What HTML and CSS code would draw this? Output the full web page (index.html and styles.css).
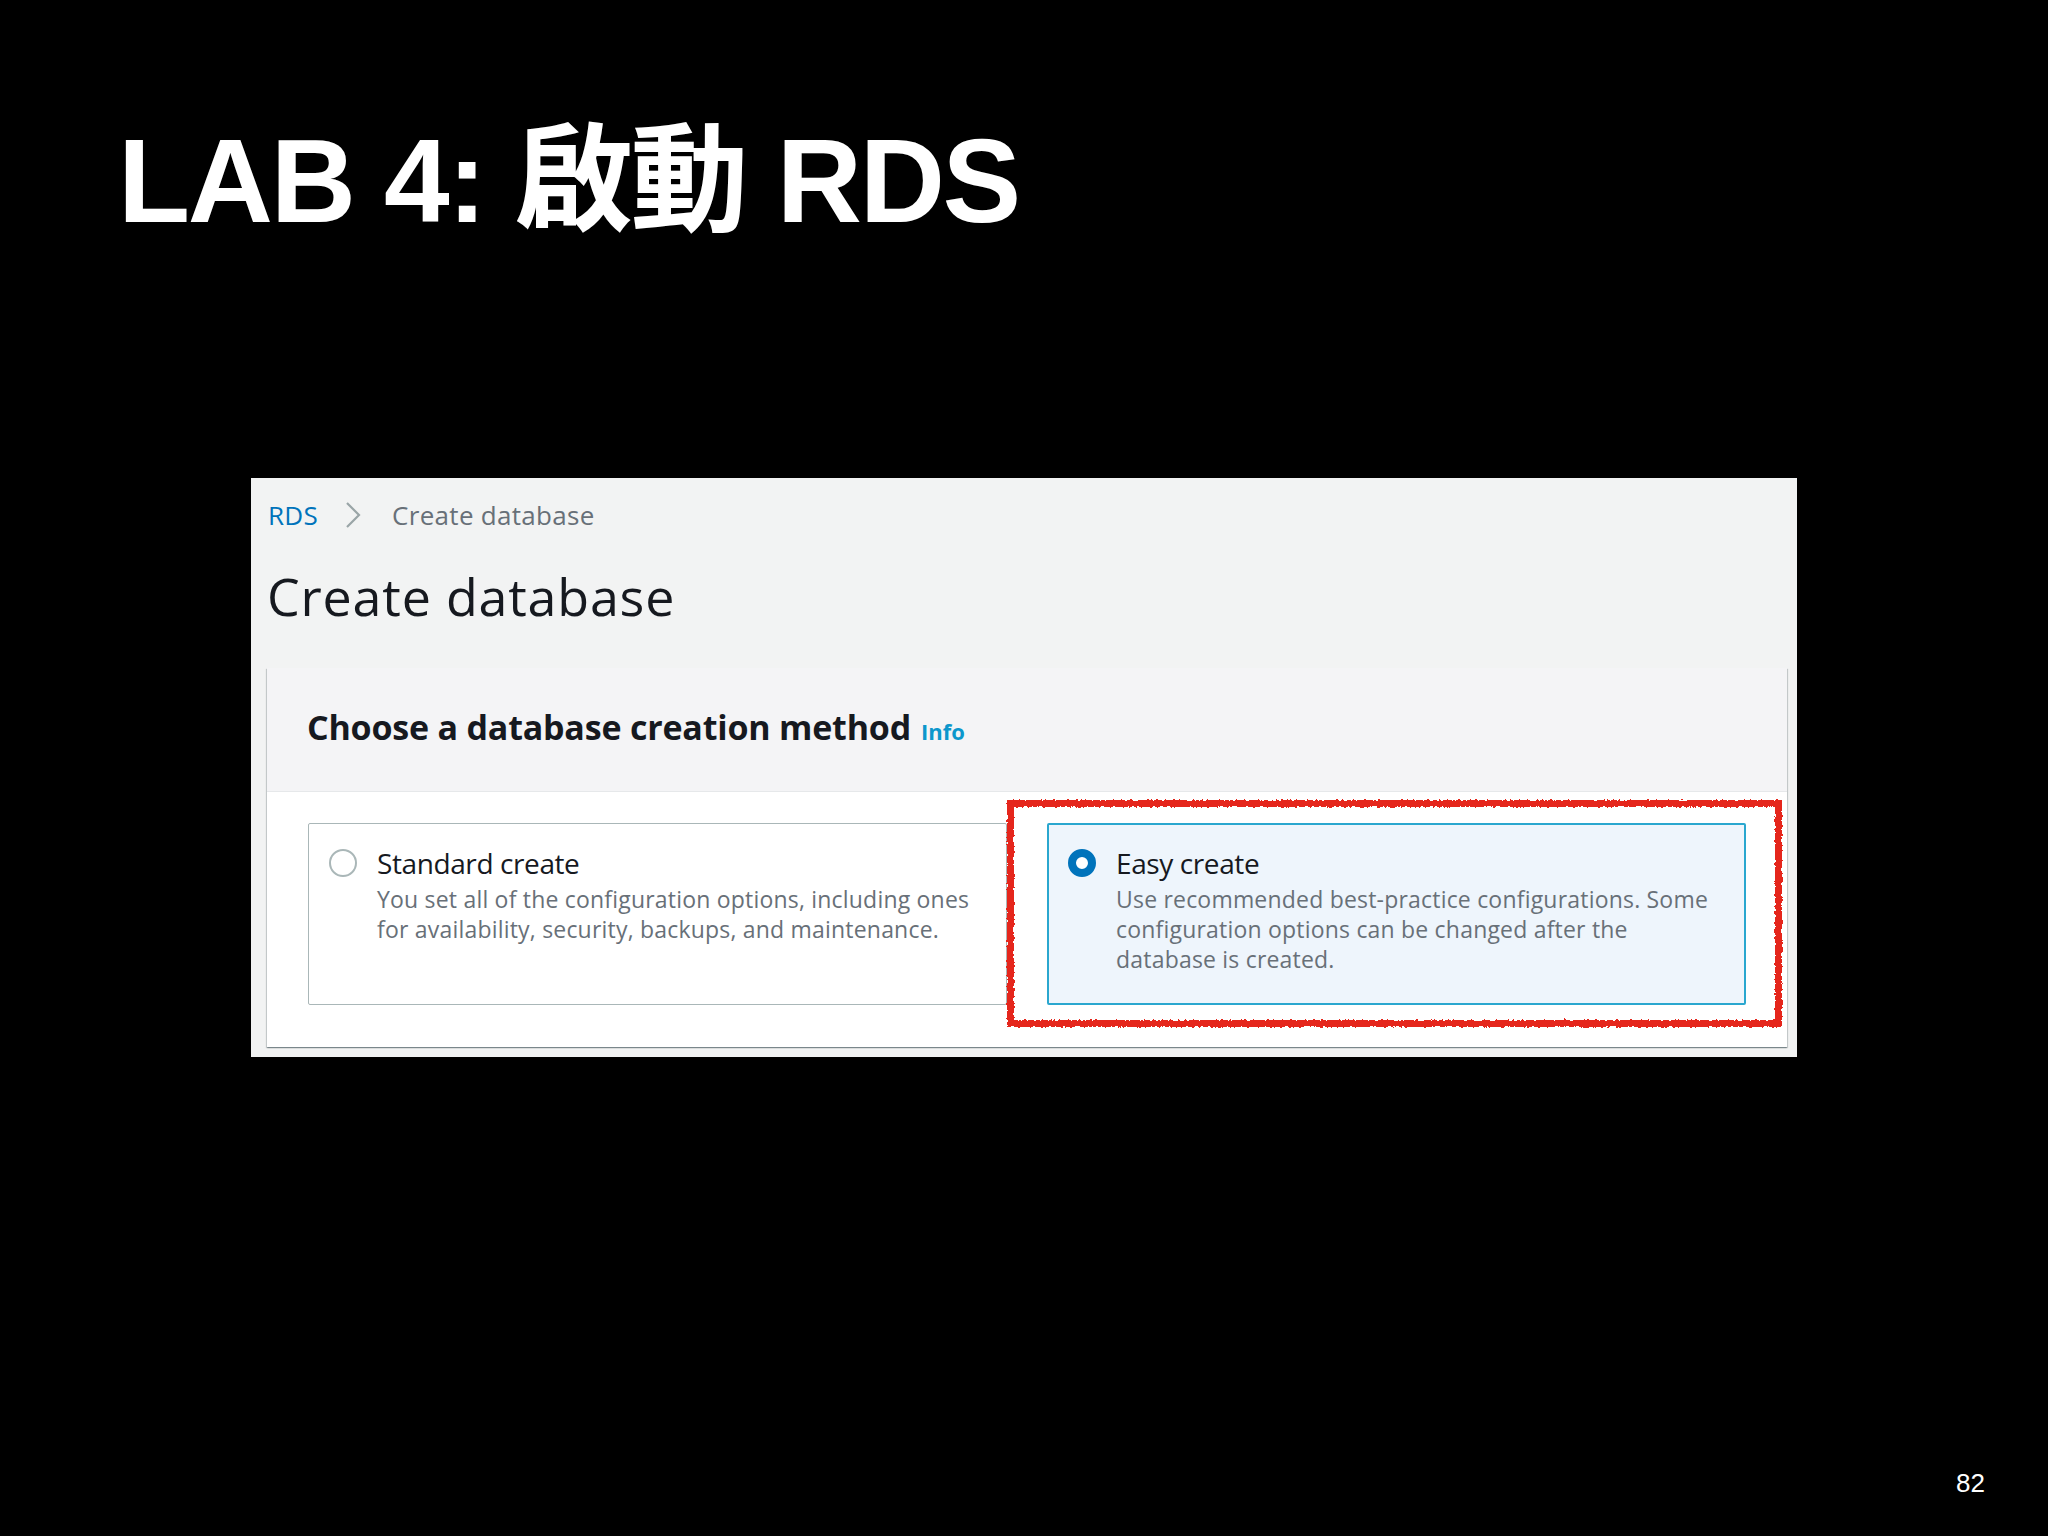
FILE: index.html
```html
<!DOCTYPE html>
<html lang="zh-Hant">
<head>
<meta charset="utf-8">
<title>LAB 4: 啟動 RDS</title>
<link rel="stylesheet" href="styles.css">
</head>
<body>
<div class="slide">
  <h1 class="slide-title">LAB 4: 啟動 RDS</h1>

  <div class="shot">
    <div class="breadcrumb">
      <span class="crumb-link">RDS</span>
      <svg class="crumb-sep" width="18" height="30" viewBox="0 0 18 30"><path d="M3 3 L15 15 L3 27" fill="none" stroke="#9aa5a7" stroke-width="2.2"/></svg>
      <span class="crumb-current">Create database</span>
    </div>
    <h2 class="page-heading">Create database</h2>

    <div class="card">
      <div class="card-header">
        <span class="card-title">Choose a database creation method</span>
        <span class="info-link">Info</span>
      </div>
      <div class="card-body">
        <div class="option">
          <span class="radio"></span>
          <div class="option-text">
            <div class="option-title">Standard create</div>
            <div class="option-desc">You set all of the configuration options, including ones<br>for availability, security, backups, and maintenance.</div>
          </div>
        </div>
        <div class="option option-selected">
          <span class="radio radio-on"></span>
          <div class="option-text">
            <div class="option-title">Easy create</div>
            <div class="option-desc">Use recommended best-practice configurations. Some<br>configuration options can be changed after the<br>database is created.</div>
          </div>
        </div>
        <div class="annotation"></div>
      </div>
    </div>
  </div>

  <div class="page-num">82</div>
</div>

<svg class="defs" width="0" height="0">
  <filter id="rough" x="-5%" y="-5%" width="110%" height="110%">
    <feTurbulence type="fractalNoise" baseFrequency="0.35" numOctaves="2" seed="3"/>
    <feDisplacementMap in="SourceGraphic" scale="4"/>
  </filter>
</svg>
</body>
</html>
```

FILE: styles.css
```css
html, body {
  margin: 0;
  padding: 0;
  background: #000;
}

.slide {
  width: 2048px;
  height: 1536px;
  display: flex;
  flex-direction: column;
  box-sizing: border-box;
  padding-bottom: 38px;
}

.slide-title {
  margin: 122px 0 0 118px;
  font-family: "Liberation Sans", "Noto Sans CJK TC", sans-serif;
  font-weight: 700;
  font-size: 118px;
  line-height: 118px;
  letter-spacing: -2.3px;
  color: #fff;
}

.shot {
  margin: 238px 0 0 251px;
  width: 1546px;
  height: 579px;
  box-sizing: border-box;
  background: #f2f3f3;
  padding: 19px 10px 0 16px;
  font-family: "Open Sans", "Noto Sans", sans-serif;
}

.breadcrumb {
  display: flex;
  align-items: center;
  height: 36px;
  font-size: 26px;
  line-height: 36px;
  letter-spacing: 0.3px;
}

.crumb-link {
  color: #0073bb;
  margin-left: 1px;
}

.crumb-sep {
  margin: 0 30px 0 26px;
}

.crumb-current {
  color: #687078;
}

.page-heading {
  margin: 33px 0 0 0;
  font-size: 52px;
  line-height: 60px;
  font-weight: 400;
  color: #16191f;
  letter-spacing: 0.8px;
}

.card {
  margin-top: 42px;
  background: #fff;
  box-shadow: 0 1px 1px 0 rgba(0, 28, 36, 0.3), 1px 1px 1px 0 rgba(0, 28, 36, 0.15), -1px 1px 1px 0 rgba(0, 28, 36, 0.15);
}

.card-header {
  height: 124px;
  box-sizing: border-box;
  padding: 39px 40px 0 40px;
  background: #f4f4f6;
  border-bottom: 1px solid #e6e8ea;
  display: flex;
  align-items: baseline;
  gap: 10px;
}

.card-title {
  font-size: 34px;
  line-height: 40px;
  font-weight: 700;
  color: #16191f;
  letter-spacing: -0.2px;
}

.info-link {
  font-size: 22px;
  font-weight: 700;
  color: #0c97cc;
  letter-spacing: 0;
}

.card-body {
  position: relative;
  padding: 31px 41px 42px 41px;
  display: grid;
  grid-template-columns: 1fr 1fr;
  gap: 40px;
}

.option {
  min-height: 182px;
  box-sizing: border-box;
  border: 1px solid #aab7b8;
  border-radius: 2px;
  background: #fff;
  padding: 21px 20px 20px 20px;
  display: flex;
  align-items: flex-start;
  gap: 20px;
}

.option-selected {
  border: 2px solid #2aa7cf;
  background: #eef5fc;
  padding: 20px 19px 19px 19px;
}

.radio {
  flex: none;
  width: 28px;
  height: 28px;
  box-sizing: border-box;
  border-radius: 50%;
  border: 2px solid #aab7b8;
  background: #fff;
  margin-top: 4px;
}

.radio-on {
  border: 8px solid #0073bb;
}

.option-title {
  font-size: 28px;
  line-height: 36px;
  color: #16191f;
  letter-spacing: -0.4px;
}

.option-desc {
  margin-top: 3px;
  font-size: 23px;
  line-height: 30px;
  color: #687078;
  letter-spacing: 0.2px;
  white-space: nowrap;
}

.annotation {
  position: absolute;
  left: 740px;
  top: 8px;
  width: 775px;
  height: 227px;
  box-sizing: border-box;
  border: 7px solid #e5261c;
  filter: url(#rough);
  pointer-events: none;
}

.page-num {
  margin-top: auto;
  align-self: flex-end;
  margin-right: 63px;
  font-family: "Liberation Sans", "Helvetica", sans-serif;
  font-size: 26px;
  line-height: 30px;
  color: #fff;
}

.defs {
  position: absolute;
  width: 0;
  height: 0;
}
```
